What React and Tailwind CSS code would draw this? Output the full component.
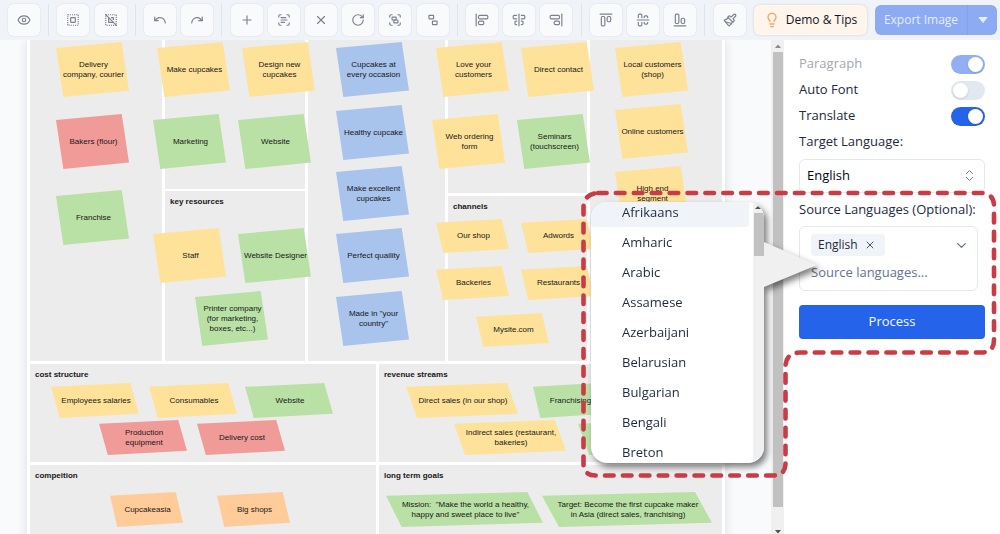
import { Fragment, useState } from 'react'
import {
  AlignCenterHorizontal,
  AlignCenterVertical,
  AlignEndHorizontal,
  AlignEndVertical,
  AlignStartHorizontal,
  AlignStartVertical,
  ChevronDown,
  ChevronsUpDown,
  Eye,
  Group,
  Lightbulb,
  Paintbrush,
  Plus,
  Redo,
  RotateCw,
  ScanText,
  Undo,
  Ungroup,
  X,
} from 'lucide-react'

function SelectAllIcon({ size = 14 }) {
  return (
    <svg width={size} height={size} viewBox="0 0 24 24" fill="none" stroke="currentColor" strokeWidth="2">
      <rect x="3" y="3" width="18" height="18" strokeDasharray="2 1.6" />
      <rect x="8" y="8" width="8" height="8" rx="1" />
    </svg>
  )
}

function DeselectIcon({ size = 14 }) {
  return (
    <svg width={size} height={size} viewBox="0 0 24 24" fill="none" stroke="currentColor" strokeWidth="2">
      <rect x="3" y="3" width="18" height="18" strokeDasharray="2 1.6" />
      <path d="M12 8h4v4M16 16H8V8" />
      <path d="M2 2l20 20" />
    </svg>
  )
}

const toolGroups = [
  [['Preview', Eye]],
  [['Select all', SelectAllIcon], ['Deselect', DeselectIcon]],
  [['Undo', Undo], ['Redo', Redo]],
  [['Add', Plus], ['Detect text', ScanText], ['Delete', X], ['Rotate', RotateCw], ['Group', Group], ['Ungroup', Ungroup]],
  [['Align left', AlignStartVertical], ['Align center', AlignCenterVertical], ['Align right', AlignEndVertical]],
  [['Align top', AlignStartHorizontal], ['Align middle', AlignCenterHorizontal], ['Align bottom', AlignEndHorizontal]],
  [['Brush', Paintbrush]],
]

const colors = {
  yellow: 'bg-[#ffe299]',
  red: 'bg-[#f19b98]',
  green: 'bg-[#b9e1a5]',
  blue: 'bg-[#a8c3ec]',
  orange: 'bg-[#ffcb99]',
}

// x, y, width, height on the board
const notes = [
  ['Delivery\ncompany, courier', 'yellow', 29, 2, 73, 55],
  ['Make cupcakes', 'yellow', 130, 2, 73, 55],
  ['Design new\ncupcakes', 'yellow', 215, 2, 73, 55],
  ['Bakers (flour)', 'red', 29, 74, 73, 55],
  ['Marketing', 'green', 126, 74, 73, 55],
  ['Website', 'green', 211, 74, 73, 55],
  ['Franchise', 'green', 29, 150, 73, 55],
  ['Staff', 'yellow', 126, 188, 73, 55],
  ['Website Designer', 'green', 211, 188, 73, 55],
  ['Printer company\n(for marketing,\nboxes, etc...)', 'green', 168, 251, 73, 55],
  ['Cupcakes at\nevery occasion', 'blue', 309, 2, 73, 55],
  ['Healthy cupcake', 'blue', 309, 65, 73, 55],
  ['Make excellent\ncupcakes', 'blue', 309, 126, 73, 55],
  ['Perfect quaility', 'blue', 309, 188, 73, 55],
  ['Made in "your\ncountry"', 'blue', 309, 251, 73, 55],
  ['Love your\ncustomers', 'yellow', 409, 2, 73, 55],
  ['Direct contact', 'yellow', 494, 2, 73, 55],
  ['Web ordering\nform', 'yellow', 405, 74, 73, 55],
  ['Seminars\n(touchscreen)', 'green', 490, 74, 73, 55],
  ['Our shop', 'yellow', 409, 179, 73, 34],
  ['Adwords', 'yellow', 494, 179, 73, 34],
  ['Backeries', 'yellow', 409, 226, 73, 34],
  ['Restaurants', 'yellow', 494, 226, 73, 34],
  ['Mysite.com', 'yellow', 449, 273, 73, 34],
  ['Local customers\n(shop)', 'yellow', 588, 2, 73, 55],
  ['Online customers', 'yellow', 588, 64, 73, 55],
  ['High end\nsegment', 'yellow', 588, 126, 73, 55],
  ['Employees salaries', 'yellow', 24, 343, 88, 35],
  ['Consumables', 'yellow', 122, 343, 88, 35],
  ['Website', 'green', 218, 343, 88, 35],
  ['Production\nequipment', 'red', 72, 380, 88, 35],
  ['Delivery cost', 'red', 170, 380, 88, 35],
  ['Direct sales (in our shop)', 'yellow', 379, 343, 112, 35],
  ['Franchising', 'green', 506, 343, 73, 35],
  ['Indirect sales (restaurant,\nbakeries)', 'yellow', 427, 380, 112, 35],
  ['', 'green', 551, 380, 112, 35],
  ['Cupcakeasia', 'orange', 83, 452, 73, 35],
  ['Big shops', 'orange', 190, 452, 73, 35],
  ['Mission:  "Make the world a healthy,\nhappy and sweet place to live"', 'green', 359, 452, 157, 35],
  ['Target: Become the first cupcake maker\nin Asia (direct sales, franchising)', 'green', 515, 452, 170, 35],
]

const languages = ['Afrikaans', 'Amharic', 'Arabic', 'Assamese', 'Azerbaijani', 'Belarusian', 'Bulgarian', 'Bengali', 'Breton']

function Toolbar() {
  return (
    <header className="flex h-10 shrink-0 items-center gap-2 bg-[#f0f4f9] pr-[3px] pl-2 text-[#7b818c]">
      <div className="flex flex-1 items-center justify-between">
        {toolGroups.map((group, i) => (
          <Fragment key={i}>
            {i > 0 && <span className="mx-[3px] h-8 w-px bg-[#dfe4eb]" />}
            {group.map(([label, Icon]) => (
              <button
                key={label}
                aria-label={label}
                className="flex size-8 items-center justify-center rounded-md bg-[#f9fafc] shadow-[0_0_2px_rgba(15,23,42,0.12)]"
              >
                <Icon size={14} />
              </button>
            ))}
          </Fragment>
        ))}
      </div>
      <button className="flex h-[30px] w-[113px] items-center justify-center gap-1.5 rounded-md bg-[#fff5ea] text-[12px] font-medium whitespace-nowrap text-slate-900 shadow-[0_0_3px_rgba(15,23,42,0.15)]">
        <Lightbulb size={16} className="text-[#f8a35c]" />
        Demo &amp; Tips
      </button>
      <div className="flex h-[30px] w-[122px] overflow-hidden rounded-md bg-[#8cabf3] text-[#e6edfc]">
        <button className="flex-1 text-[12px] font-medium whitespace-nowrap">Export Image</button>
        <button aria-label="Export options" className="flex w-[30px] items-center justify-center border-l border-[#84a2ec]">
          <svg width="10" height="6" viewBox="0 0 10 6" fill="currentColor">
            <path d="M1 0.5h8L5 5.5z" stroke="currentColor" strokeLinejoin="round" />
          </svg>
        </button>
      </div>
    </header>
  )
}

function Cell({ title, className }) {
  return (
    <section className={`bg-[#ececec] p-[5px] ${className}`}>
      {title && <h3 className="text-[8px] leading-3 font-bold">{title}</h3>}
    </section>
  )
}

function Note({ note }) {
  const [text, color, left, top, width, height] = note
  return (
    <div
      className={`absolute flex items-center justify-center pl-0.5 text-center text-[8px] leading-[10px] whitespace-pre [clip-path:polygon(0_11%,90%_0,100%_88%,10%_100%)] ${colors[color]}`}
      style={{ left, top, width, height }}
    >
      {text}
    </div>
  )
}

function Board() {
  return (
    <div className="relative ml-[27px] flex w-[698px] shrink-0 flex-col gap-[3px] bg-white px-[3px] font-['Liberation_Sans',Arial,sans-serif] text-neutral-900 shadow-[0_0_10px_rgba(15,23,42,0.12)]">
      <div className="flex h-[321px] gap-[3px]">
        <Cell className="w-[132px]" />
        <div className="flex w-[140px] flex-col gap-[2px]">
          <Cell className="h-[149px]" />
          <Cell title="key resources" className="flex-1" />
        </div>
        <Cell className="w-[137px]" />
        <div className="flex w-[139px] flex-col gap-[3px]">
          <Cell className="h-[153px]" />
          <Cell title="channels" className="flex-1" />
        </div>
        <Cell className="flex-1" />
      </div>
      <div className="flex h-[98px] gap-[3px]">
        <Cell title="cost structure" className="w-[346px]" />
        <Cell title="revenue streams" className="flex-1" />
      </div>
      <div className="flex h-[120px] gap-[3px]">
        <Cell title="compeition" className="w-[346px]" />
        <Cell title="long term goals" className="flex-1" />
      </div>
      {notes.map((note, i) => (
        <Note key={i} note={note} />
      ))}
    </div>
  )
}

function Scrollbar() {
  return (
    <div className="flex w-[13px] shrink-0 flex-col items-center justify-between bg-[#f0f0f0]">
      <svg width="6" height="12" viewBox="0 0 6 12" fill="#8a8a8a">
        <path d="M0 8l3-3.5L6 8z" />
      </svg>
      <div className="mb-[20px] w-[10px] flex-1 bg-[#c1c1c1]" />
      <svg className="shrink-0" width="6" height="7" viewBox="0 0 6 7" fill="#505050">
        <path d="M0 3h6L3 6.500z" />
      </svg>
    </div>
  )
}

function Toggle({ label, checked, disabled, onChange }) {
  return (
    <label className={`flex h-[26px] items-center justify-between ${disabled ? 'text-[#a3a7af]' : ''}`}>
      {label}
      <input type="checkbox" role="switch" className="peer sr-only" checked={checked} disabled={disabled} onChange={onChange} />
      <span className="flex h-[19px] w-[34px] rounded-full bg-slate-200 p-0.5 peer-checked:justify-end peer-checked:bg-[#2563eb] peer-disabled:bg-[#92aff5]">
        <span className="size-[15px] rounded-full bg-white shadow" />
      </span>
    </label>
  )
}

function SettingsPanel() {
  const [autoFont, setAutoFont] = useState(false)
  const [translate, setTranslate] = useState(true)

  return (
    <aside className="w-[216px] shrink-0 bg-white px-[15px] pt-[11px] text-[13px] text-slate-800">
      <Toggle label="Paragraph" checked disabled />
      <Toggle label="Auto Font" checked={autoFont} onChange={() => setAutoFont(!autoFont)} />
      <Toggle label="Translate" checked={translate} onChange={() => setTranslate(!translate)} />
      <label htmlFor="target" className="flex h-[26px] items-center">Target Language:</label>
      <div className="relative mt-1">
        <select
          id="target"
          className="block h-[34px] w-full appearance-none rounded-md border border-slate-200 bg-white px-[7px] font-medium text-slate-950"
        >
          <option>English</option>
        </select>
        <ChevronsUpDown size={15} strokeWidth={1.5} className="pointer-events-none absolute top-[9px] right-2 text-slate-500" />
      </div>
      <label htmlFor="source" className="mt-1 flex h-[26px] items-center whitespace-nowrap">Source Languages (Optional):</label>
      <div className="mt-[3px] mr-[7px] rounded-md border border-slate-200 px-[11px] pt-[7px] pb-1.5">
        <div className="flex items-center justify-between">
          <span className="flex h-[22px] items-center gap-1.5 rounded bg-[#f0f4f9] pr-[9px] pl-[7px] text-[12px]">
            English
            <button aria-label="Remove English">
              <X size={12} className="text-slate-600" />
            </button>
          </span>
          <ChevronDown size={15} className="-mr-[3px] text-slate-500" />
        </div>
        <input
          id="source"
          className="mt-1 block h-6 w-full bg-transparent outline-none placeholder:text-slate-500"
          placeholder="Source languages..."
        />
      </div>
      <button className="mt-[14px] h-[34px] w-full rounded bg-[#2563eb] font-medium text-slate-50">Process</button>
    </aside>
  )
}

function LanguageCallout() {
  return (
    <div className="absolute top-[202px] right-[236px] h-[261px] w-[173px] [filter:drop-shadow(3px_4px_3px_rgba(0,0,0,0.5))]">
      <div className="flex h-full overflow-hidden rounded-[16px] bg-white">
        <ul role="listbox" className="-mt-[5px] flex-1 text-[13px] text-slate-800">
          {languages.map((language, i) => (
            <li
              key={language}
              role="option"
              aria-selected={i === 0}
              className={`mr-1 flex h-[30px] items-center pl-[31px] leading-none ${i === 0 ? 'rounded bg-[#f0f4f9]' : ''}`}
            >
              {language}
            </li>
          ))}
        </ul>
        <div className="flex w-[11px] flex-col items-end bg-[#f0f0f0]">
          <svg className="mr-[3px]" width="6" height="11" viewBox="0 0 6 11" fill="#505050">
            <path d="M0 7l3-3L6 7z" />
          </svg>
          <div className="h-[43px] w-[10px] bg-[#c1c1c1]" />
        </div>
      </div>
      <svg className="absolute top-10 left-full" width="54" height="45" viewBox="0 0 54 45" fill="#f0f0f0">
        <path d="M0 0l53 23L0 45z" />
      </svg>
    </div>
  )
}

function DashedOutline() {
  return (
    <svg
      className="pointer-events-none absolute top-[190px] right-0"
      width="420"
      height="290"
      viewBox="580 190 420 290"
      fill="none"
      stroke="#c93b45"
      strokeWidth="4.600"
      strokeLinecap="round"
      strokeDasharray="8.600 9.300"
    >
      <path d="M598 193H982Q994 194 994 206V340Q994 352 982 352.500H800Q785.500 353 785.500 367V464Q785 475.500 773 475.500H596Q583.500 475.500 583.500 464V207Q584 194 598 193" />
    </svg>
  )
}

export default function App() {
  return (
    <div className="relative flex h-screen flex-col overflow-hidden bg-[#f8fafc] font-['Open_Sans','Noto_Sans',sans-serif]">
      <Toolbar />
      <main className="flex min-h-0 flex-1">
        <div className="flex min-w-0 flex-1 items-start overflow-hidden">
          <Board />
        </div>
        <Scrollbar />
        <SettingsPanel />
      </main>
      <LanguageCallout />
      <DashedOutline />
    </div>
  )
}
